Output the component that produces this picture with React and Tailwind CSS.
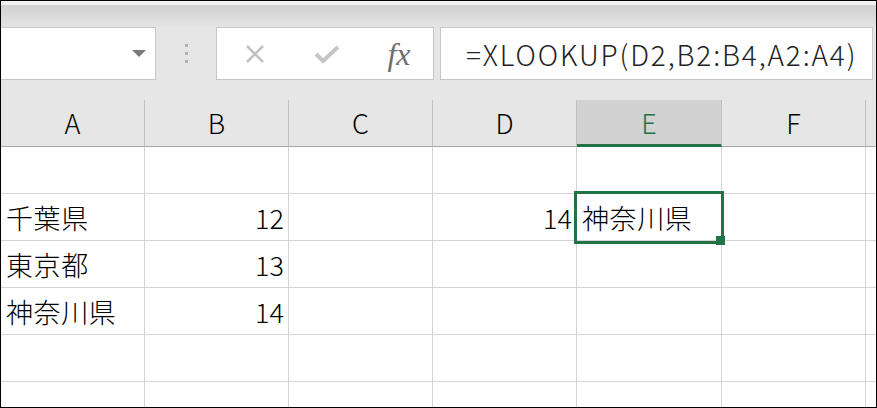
import React from 'react';

const font = { fontFamily: '"Noto Sans CJK JP", "Noto Sans", sans-serif' };

const cols = [
  { name: 'A', w: 'w-[144px]' },
  { name: 'B', w: 'w-[144px]' },
  { name: 'C', w: 'w-[144px]' },
  { name: 'D', w: 'w-[144px]' },
  { name: 'E', w: 'w-[145px]' },
  { name: 'F', w: 'w-[144px]' },
];

const rows = [
  ['', '', '', '', '', ''],
  ['千葉県', '12', '', '14', '神奈川県', ''],
  ['東京都', '13', '', '', '', ''],
  ['神奈川県', '14', '', '', '', ''],
  ['', '', '', '', '', ''],
  ['', '', '', '', '', ''],
];

const isNum = (v) => /^\d+$/.test(v);

const Cell = ({ w, value }) => (
  <div
    className={`${w} h-[47px] shrink-0 border-r border-b border-[#d4d4d4] flex items-center text-[27px] font-light text-black leading-none ${
      isNum(value) ? 'justify-end pr-[4px]' : 'justify-start pl-[5px] tracking-[0.6px]'
    }`}
  >
    <span className="whitespace-nowrap">{value}</span>
  </div>
);

export default function App() {
  return (
    <div
      className="w-[877px] h-[408px] border border-black bg-[#e6e6e6] overflow-hidden flex flex-col"
      style={font}
    >
      {/* ribbon shadow */}
      <div className="h-[4px] shrink-0 bg-[#f3f3f3]" />
      <div className="h-[22px] shrink-0 bg-gradient-to-b from-[#d0d0d0] to-[#e4e4e4]" />

      {/* formula bar */}
      <div className="h-[53px] shrink-0 flex">
        <div className="w-[155px] shrink-0 bg-white border-y border-r border-[#c6c6c6] flex items-center justify-end pr-[9px]">
          <svg width="14" height="7" viewBox="0 0 14 7">
            <path d="M0 0 H14 L7 7 Z" fill="#7a7a7a" />
          </svg>
        </div>
        <div className="w-[60px] shrink-0 flex flex-col items-center justify-center gap-[5px]">
          <div className="w-[3px] h-[3px] bg-[#b3b3b3]" />
          <div className="w-[3px] h-[3px] bg-[#b3b3b3]" />
          <div className="w-[3px] h-[3px] bg-[#b3b3b3]" />
        </div>
        <div className="w-[218px] shrink-0 bg-white border border-[#c6c6c6] flex items-center">
          <div className="w-[72px] flex justify-center pl-[3px]">
            <svg width="20" height="20" viewBox="0 0 20 20">
              <path d="M2 2 L18 18 M18 2 L2 18" stroke="#c2c2c2" strokeWidth="2.6" />
            </svg>
          </div>
          <div className="w-[72px] flex justify-center pl-[4px]">
            <svg width="26" height="20" viewBox="0 0 26 20">
              <path d="M2 10 L9 17 L24 3" stroke="#c6c6c6" strokeWidth="4" fill="none" />
            </svg>
          </div>
          <div className="flex-1 flex justify-center pl-[4px]">
            <span
              className="text-[32px] italic text-[#6e6e6e] leading-none"
              style={{ fontFamily: '"Liberation Serif", serif' }}
            >
              fx
            </span>
          </div>
        </div>
        <div className="w-[6px] shrink-0" />
        <div className="w-[433px] shrink-0 bg-white border border-[#c6c6c6] flex items-center pl-[25px]">
          <span className="text-[28px] font-light tracking-[1.85px] text-[#222] whitespace-nowrap leading-none">
            =XLOOKUP(D2,B2:B4,A2:A4)
          </span>
        </div>
      </div>

      <div className="h-[20px] shrink-0" />

      {/* column headers */}
      <div className="h-[47px] shrink-0 flex">
        {cols.map((c) =>
          c.name === 'E' ? (
            <div
              key={c.name}
              className={`${c.w} shrink-0 bg-[#d2d2d2] border-r border-[#c0c0c0] border-b-[3px] border-b-[#217346] flex items-center justify-center text-[27px] font-light text-[#217346] pt-[2px]`}
            >
              {c.name}
            </div>
          ) : (
            <div
              key={c.name}
              className={`${c.w} shrink-0 border-r border-b border-r-[#c0c0c0] border-b-[#a6a6a6] flex items-center justify-center text-[27px] font-light text-black`}
            >
              {c.name}
            </div>
          )
        )}
        <div className="flex-1 border-b border-[#a6a6a6]" />
      </div>

      {/* cells */}
      <div className="relative flex-1 bg-white">
        {rows.map((r, i) => (
          <div key={i} className="flex">
            {cols.map((c, j) => (
              <Cell key={c.name} w={c.w} value={r[j]} />
            ))}
            <div className="flex-1 h-[47px] border-b border-[#d4d4d4]" />
          </div>
        ))}
        <div className="absolute left-[573px] top-[44px] w-[150px] h-[53px] border-[3px] border-[#217346]" />
        <div className="absolute left-[715px] top-[89px] w-[9px] h-[9px] bg-[#217346]" />
      </div>
    </div>
  );
}
